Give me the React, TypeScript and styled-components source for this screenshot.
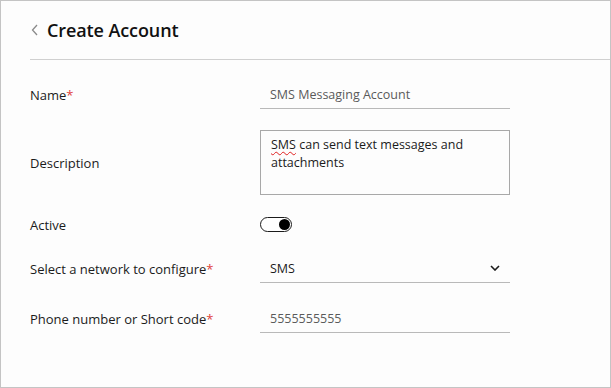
import styled, { createGlobalStyle } from "styled-components";
import { useState } from "react";

const GlobalStyle = createGlobalStyle`
  html, body {
    margin: 0;
    padding: 0;
    background: #fdfdfd;
  }
  body {
    font-family: "Open Sans", "Noto Sans", sans-serif;
    color: #1b1b1b;
  }
`;

const Frame = styled.div`
  box-sizing: border-box;
  width: 611px;
  height: 388px;
  border: 1px solid #c4c4c4;
  background: #fdfdfd;
  padding-left: 29px;
`;

const Header = styled.div`
  display: flex;
  align-items: center;
  gap: 8px;
  height: 59px;
  border-bottom: 1.5px solid #d0d0d0;
  padding-left: 1px;
  box-sizing: border-box;
`;

const Title = styled.h1`
  margin: 0;
  font-size: 18px;
  font-weight: 600;
  color: #111;
  letter-spacing: -0.1px;
`;

const Form = styled.div`
  display: flex;
  flex-direction: column;
  padding-top: 18px;
  width: 480px;
`;

const Row = styled.div<{ $height: number }>`
  display: grid;
  grid-template-columns: 230px 250px;
  align-items: center;
  height: ${(p) => p.$height}px;
`;

const Label = styled.span`
  font-size: 13px;
  color: #1b1b1b;
`;

const Required = styled.span`
  color: #e0403a;
`;

const Underlined = styled.div`
  display: flex;
  align-items: center;
  justify-content: space-between;
  height: 28px;
  box-sizing: border-box;
  border-bottom: 1px solid #b9b9b9;
  padding: 0 10px;
  font-size: 12.5px;
`;

const Value = styled.span<{ $muted?: boolean }>`
  color: ${(p) => (p.$muted ? "#5a5a5a" : "#1b1b1b")};
`;

const TextArea = styled.div`
  box-sizing: border-box;
  height: 65px;
  border: 1px solid #a8a8a8;
  padding: 5px 10px;
  font-size: 12.5px;
  line-height: 18px;
  color: #1b1b1b;
`;

const Misspelled = styled.span`
  text-decoration: underline wavy #e02020;
  text-decoration-thickness: 1px;
  text-underline-offset: 2px;
`;

const Toggle = styled.button<{ $on: boolean }>`
  position: relative;
  width: 32px;
  height: 15px;
  border: 1.5px solid #1b1b1b;
  border-radius: 8px;
  background: #fff;
  padding: 0;
  cursor: pointer;
  box-sizing: border-box;

  &::after {
    content: "";
    position: absolute;
    top: 0.5px;
    left: ${(p) => (p.$on ? "18px" : "1px")};
    width: 11px;
    height: 11px;
    border-radius: 50%;
    background: #000;
  }
`;

const BackIcon = () => (
  <svg width="8" height="12" viewBox="0 0 8 12">
    <path d="M6 1 L1.5 6 L6 11" stroke="#8a8a8a" strokeWidth="1.3" fill="none" />
  </svg>
);

const ChevronDown = () => (
  <svg width="10" height="6" viewBox="0 0 10 6">
    <path d="M1 1 L5 5 L9 1" stroke="#1b1b1b" strokeWidth="1.6" fill="none" />
  </svg>
);

const App = () => {
  const [active, setActive] = useState(true);

  return (
    <Frame>
      <GlobalStyle />
      <Header>
        <BackIcon />
        <Title>Create Account</Title>
      </Header>
      <Form>
        <Row $height={33}>
          <Label>
            Name<Required>*</Required>
          </Label>
          <Underlined>
            <Value $muted>SMS Messaging Account</Value>
          </Underlined>
        </Row>
        <Row $height={103}>
          <Label>Description</Label>
          <TextArea>
            <Misspelled>SMS</Misspelled> can send text messages and attachments
          </TextArea>
        </Row>
        <Row $height={20}>
          <Label>Active</Label>
          <div>
            <Toggle $on={active} onClick={() => setActive(!active)} />
          </div>
        </Row>
        <Row $height={69}>
          <Label>
            Select a network to configure<Required>*</Required>
          </Label>
          <Underlined>
            <Value>SMS</Value>
            <ChevronDown />
          </Underlined>
        </Row>
        <Row $height={32}>
          <Label>
            Phone number or Short code<Required>*</Required>
          </Label>
          <Underlined>
            <Value $muted>5555555555</Value>
          </Underlined>
        </Row>
      </Form>
    </Frame>
  );
};

export default App;
